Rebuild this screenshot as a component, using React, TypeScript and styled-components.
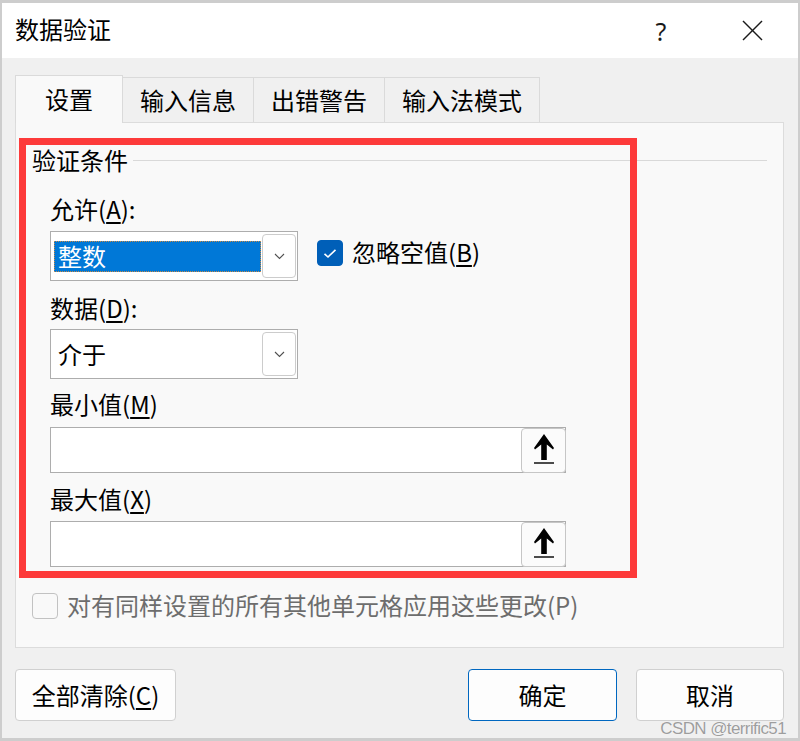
import React from 'react';
import styled, { createGlobalStyle } from 'styled-components';

const GlobalStyle = createGlobalStyle`
  html, body { margin: 0; padding: 0; }
  body {
    background: #cdcdcd;
    font-family: "Noto Sans CJK SC", "Noto Sans", sans-serif;
    overflow: hidden;
  }
`;

const Page = styled.div`
  width: 800px;
  height: 741px;
  box-sizing: border-box;
  padding: 3px 2px 3px 2px;
`;

const Window = styled.div`
  position: relative;
  width: 796px;
  height: 735px;
  background: #f0f0f0;
  display: flex;
  flex-direction: column;
`;

const TitleBar = styled.div`
  height: 55px;
  flex: none;
  background: #ffffff;
  display: flex;
  align-items: center;
  padding-left: 13px;
`;

const Title = styled.div`
  flex: 1;
  font-size: 24px;
  line-height: 32px;
  color: #000;
  padding-bottom: 3px;
`;

const TitleButton = styled.div<{ $w: number }>`
  width: ${(p) => p.$w}px;
  height: 55px;
  display: flex;
  align-items: center;
  justify-content: center;
  color: #1a1a1a;
  font-family: "Noto Sans", sans-serif;
  font-size: 25px;
`;

const TabRow = styled.div`
  display: flex;
  align-items: flex-end;
  height: 47px;
  margin: 17px 14px 0 13px;
  position: relative;
  z-index: 1;
`;

const Tab = styled.div<{ $active?: boolean }>`
  box-sizing: border-box;
  height: ${(p) => (p.$active ? 48 : 45)}px;
  margin-bottom: ${(p) => (p.$active ? -1 : 0)}px;
  min-width: 108px;
  padding: 0 17px;
  margin-left: -1px;
  &:first-child { margin-left: 0; }
  display: flex;
  align-items: center;
  justify-content: center;
  background: ${(p) => (p.$active ? '#f9f9f9' : '#f0f0f0')};
  border: 1px solid #dadada;
  border-bottom: none;
  font-size: 24px;
  color: #000;
  padding-bottom: 2px;
`;

const PanelWrap = styled.div`
  position: relative;
  margin: 0 14px 0 13px;
`;

const Panel = styled.div`
  box-sizing: border-box;
  height: 526px;
  border: 1px solid #dcdcdc;
  background: #f9f9f9;
  padding: 22px 16px 0 16px;
  display: flex;
  flex-direction: column;
`;

const GroupHeader = styled.div`
  display: flex;
  align-items: center;
  height: 32px;
`;

const GroupTitle = styled.div`
  font-size: 24px;
  line-height: 30px;
  padding-bottom: 2px;
  color: #000;
`;

const GroupLine = styled.div`
  flex: 1;
  height: 1px;
  background: #d9d9d9;
  margin-left: 5px;
  margin-top: -1px;
`;

const Fields = styled.div`
  display: flex;
  flex-direction: column;
  padding-left: 18px;
`;

const FieldLabel = styled.div<{ $mt: number }>`
  box-sizing: border-box;
  margin-top: ${(p) => p.$mt}px;
  font-size: 24px;
  line-height: 30px;
  height: 32px;
  padding-bottom: 2px;
  color: #000;
`;

const Key = styled.span`
  text-decoration: underline;
  text-decoration-thickness: 1.5px;
  text-underline-offset: 3px;
`;

const ComboRow = styled.div<{ $mt: number }>`
  margin-top: ${(p) => p.$mt}px;
  display: flex;
  align-items: flex-start;
`;

const Combo = styled.div`
  box-sizing: border-box;
  width: 248px;
  height: 50px;
  border: 1px solid #adadad;
  background: #ffffff;
  padding: 1px;
  display: flex;
`;

const ComboValue = styled.div<{ $selected?: boolean }>`
  flex: 1;
  box-sizing: border-box;
  margin: 8px 1px 7px 2px;
  padding-left: 3px;
  font-size: 24px;
  line-height: 28px;
  padding-bottom: 1px;
  color: ${(p) => (p.$selected ? '#ffffff' : '#000000')};
  background: ${(p) => (p.$selected ? '#0078d7' : 'transparent')};
  border: 1px ${(p) => (p.$selected ? 'dotted #c98a45' : 'solid transparent')};
`;

const ComboButton = styled.div`
  box-sizing: border-box;
  width: 34px;
  margin: 1px 0 1px 0;
  border: 1px solid #cccccc;
  border-radius: 4px;
  background: #ffffff;
  display: flex;
  align-items: center;
  justify-content: center;
`;

const CheckLabel = styled.label<{ $disabled?: boolean }>`
  display: flex;
  align-items: center;
  gap: 9px;
  font-size: 24px;
  line-height: 32px;
  color: ${(p) => (p.$disabled ? '#6d6d6d' : '#000')};
`;

const CheckText = styled.span`
  line-height: 30px;
  padding-bottom: 2px;
`;

const CheckBox = styled.span<{ $checked?: boolean }>`
  box-sizing: border-box;
  width: 26px;
  height: 26px;
  border-radius: 4px;
  flex: none;
  display: flex;
  align-items: center;
  justify-content: center;
  background: ${(p) => (p.$checked ? '#005fb8' : '#f9f9f9')};
  border: 1px solid ${(p) => (p.$checked ? '#005fb8' : '#c2c2c2')};
`;

const BlankCheckRow = styled.div`
  margin-left: 19px;
  margin-top: 6px;
`;

const RefInput = styled.div<{ $mt: number }>`
  margin-top: ${(p) => p.$mt}px;
  box-sizing: border-box;
  width: 516px;
  height: 46px;
  border: 1px solid #adadad;
  background: #ffffff;
  display: flex;
  justify-content: flex-end;
`;

const RefButton = styled.div`
  box-sizing: border-box;
  width: 45px;
  height: 45px;
  margin: 0 -1px -1px 0;
  border: 1px solid #c6c6c6;
  border-radius: 4px;
  background: #fbfbfb;
  display: flex;
  align-items: center;
  justify-content: center;
  padding-bottom: 4px;
`;

const ApplyRow = styled.div`
  margin-top: 23px;
  height: 32px;
  display: flex;
  align-items: center;
`;

const Annotation = styled.div`
  position: absolute;
  left: 4px;
  top: 16px;
  width: 618px;
  height: 440px;
  box-sizing: border-box;
  border: 7px solid #fd3a3a;
  pointer-events: none;
`;

const Footer = styled.div`
  display: flex;
  gap: 19px;
  padding: 21px 14px 0 13px;
`;

const Button = styled.div<{ $w: number; $default?: boolean; $push?: boolean }>`
  box-sizing: border-box;
  width: ${(p) => p.$w}px;
  height: 52px;
  margin-left: ${(p) => (p.$push ? 'auto' : '0')};
  border: ${(p) => (p.$default ? '1.5px solid #0067c0' : '1px solid #d0d0d0')};
  border-radius: 4px;
  background: #fdfdfd;
  display: flex;
  align-items: center;
  justify-content: center;
  font-size: 24px;
  color: #000;
  padding-bottom: 2px;
`;

const Watermark = styled.div`
  position: absolute;
  right: 12px;
  bottom: 0px;
  font-family: "Liberation Sans", Arial, sans-serif;
  font-size: 17px;
  letter-spacing: -0.6px;
  line-height: 19px;
  color: rgba(140, 140, 140, 0.85);
  text-shadow: 0 0 1px rgba(255, 255, 255, 0.8);
  pointer-events: none;
`;

const Chevron = () => (
  <svg width="11" height="7" viewBox="0 0 11 7">
    <polyline points="1,1 5.5,5.5 10,1" fill="none" stroke="#505050" strokeWidth="1.1" />
  </svg>
);

const Check = () => (
  <svg width="14" height="11" viewBox="0 0 14 11">
    <polyline points="1.5,5.8 5,9 12.5,1.8" fill="none" stroke="#ffffff" strokeWidth="1.6" />
  </svg>
);

const UpArrow = () => (
  <svg width="20" height="30" viewBox="0 0 20 30">
    <polygon points="10,0 20,14 19,15.5 12.8,10.5 12.8,26 7.2,26 7.2,10.5 1,15.5 0,14" fill="#000" />
    <rect x="0" y="28.3" width="20" height="1.4" fill="#000" />
  </svg>
);

const CloseIcon = () => (
  <svg width="21" height="21" viewBox="0 0 21 21">
    <line x1="1" y1="1" x2="20" y2="20" stroke="#1a1a1a" strokeWidth="1.5" />
    <line x1="20" y1="1" x2="1" y2="20" stroke="#1a1a1a" strokeWidth="1.5" />
  </svg>
);

export default function App() {
  return (
    <>
      <GlobalStyle />
      <Page>
        <Window>
          <TitleBar>
            <Title>数据验证</Title>
            <TitleButton $w={90}>?</TitleButton>
            <TitleButton $w={92}>
              <CloseIcon />
            </TitleButton>
          </TitleBar>

          <TabRow>
            <Tab $active>设置</Tab>
            <Tab>输入信息</Tab>
            <Tab>出错警告</Tab>
            <Tab>输入法模式</Tab>
          </TabRow>

          <PanelWrap>
            <Panel>
              <GroupHeader>
                <GroupTitle>验证条件</GroupTitle>
                <GroupLine />
              </GroupHeader>
              <Fields>
                <FieldLabel $mt={17}>
                  允许(<Key>A</Key>):
                </FieldLabel>
                <ComboRow $mt={5}>
                  <Combo>
                    <ComboValue $selected>整数</ComboValue>
                    <ComboButton>
                      <Chevron />
                    </ComboButton>
                  </Combo>
                  <BlankCheckRow>
                    <CheckLabel>
                      <CheckBox $checked>
                        <Check />
                      </CheckBox>
                      <CheckText>
                        忽略空值(<Key>B</Key>)
                      </CheckText>
                    </CheckLabel>
                  </BlankCheckRow>
                </ComboRow>

                <FieldLabel $mt={12}>
                  数据(<Key>D</Key>):
                </FieldLabel>
                <ComboRow $mt={4}>
                  <Combo>
                    <ComboValue>介于</ComboValue>
                    <ComboButton>
                      <Chevron />
                    </ComboButton>
                  </Combo>
                </ComboRow>

                <FieldLabel $mt={10}>
                  最小值(<Key>M</Key>)
                </FieldLabel>
                <RefInput $mt={6}>
                  <RefButton>
                    <UpArrow />
                  </RefButton>
                </RefInput>

                <FieldLabel $mt={11}>
                  最大值(<Key>X</Key>)
                </FieldLabel>
                <RefInput $mt={5}>
                  <RefButton>
                    <UpArrow />
                  </RefButton>
                </RefInput>
              </Fields>

              <ApplyRow>
                <CheckLabel $disabled>
                  <CheckBox />
                  <CheckText>对有同样设置的所有其他单元格应用这些更改(P)</CheckText>
                </CheckLabel>
              </ApplyRow>
            </Panel>
            <Annotation />
          </PanelWrap>

          <Footer>
            <Button $w={161}>
              全部清除(<Key>C</Key>)
            </Button>
            <Button $w={149} $default $push>
              确定
            </Button>
            <Button $w={148}>取消</Button>
          </Footer>

          <Watermark>CSDN @terrific51</Watermark>
        </Window>
      </Page>
    </>
  );
}
